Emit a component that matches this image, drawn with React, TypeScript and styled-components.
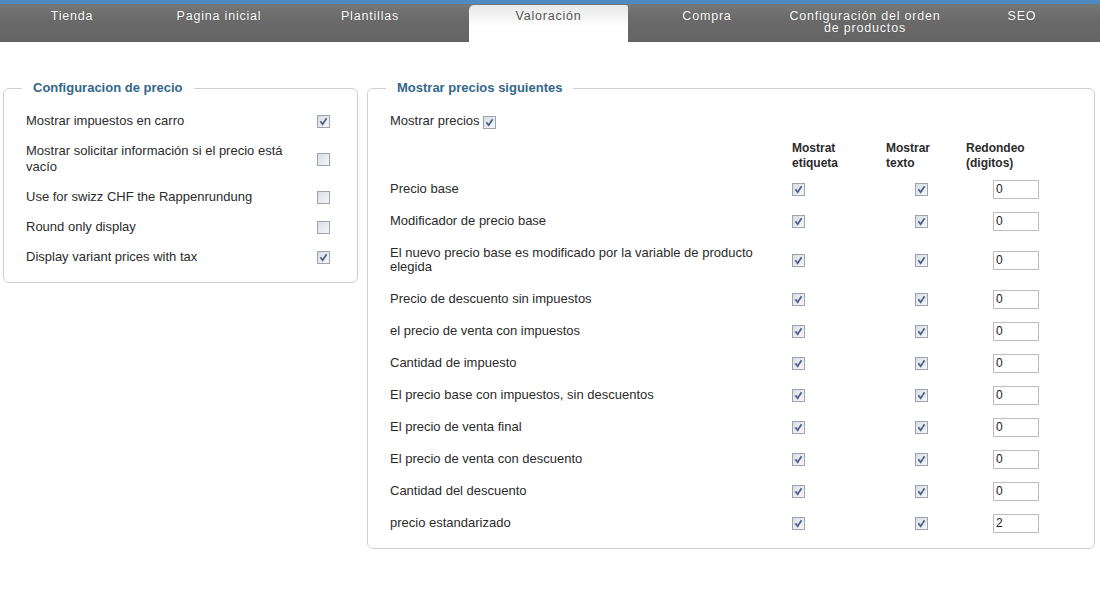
import styled, { createGlobalStyle } from 'styled-components'

const tabs = [
	{ lines: ['Tienda'], width: 144 },
	{ lines: ['Pagina inicial'], width: 150 },
	{ lines: ['Plantillas'], width: 152, tail: 23 },
	{ lines: ['Valoración'], width: 159 },
	{ lines: ['Compra'], width: 158 },
	{ lines: ['Configuración del orden', 'de productos'], width: 158 },
	{ lines: ['SEO'], width: 156 },
]
const activeTab = 3

const generalOptions = [
	{ label: 'Mostrar impuestos en carro', checked: true },
	{ label: 'Mostrar solicitar información si el precio está vacío', checked: false },
	{ label: 'Use for swizz CHF the Rappenrundung', checked: false },
	{ label: 'Round only display', checked: false },
	{ label: 'Display variant prices with tax', checked: true },
]

const priceRows = [
	{ label: 'Precio base', digits: '0' },
	{ label: 'Modificador de precio base', digits: '0' },
	{ label: 'El nuevo precio base es modificado por la variable de producto elegida', digits: '0' },
	{ label: 'Precio de descuento sin impuestos', digits: '0' },
	{ label: 'el precio de venta con impuestos', digits: '0' },
	{ label: 'Cantidad de impuesto', digits: '0' },
	{ label: 'El precio base con impuestos, sin descuentos', digits: '0' },
	{ label: 'El precio de venta final', digits: '0' },
	{ label: 'El precio de venta con descuento', digits: '0' },
	{ label: 'Cantidad del descuento', digits: '0' },
	{ label: 'precio estandarizado', digits: '2' },
]

function Check({ checked }: { checked: boolean }) {
	return (
		<CheckBox>
			{checked && (
				<svg width="9" height="9" viewBox="0 0 9 9">
					<path d="M1.4 4.2 L3.6 7.2 L7.6 1.2" fill="none" stroke="#4b5f8c" strokeWidth="1.7" />
				</svg>
			)}
		</CheckBox>
	)
}

export default function App() {
	return (
		<>
			<GlobalStyle />
			<TabBar>
				{tabs.map((t, i) => (
					<Tab key={i} $active={i === activeTab} $width={t.width} $tail={t.tail || 0}>
						{t.lines.map((l) => (
							<span key={l}>{l}</span>
						))}
					</Tab>
				))}
			</TabBar>

			<Content>
				<LeftPanel>
					<Legend>Configuracion de precio</Legend>
					{generalOptions.map((o) => (
						<OptionRow key={o.label}>
							<OptionLabel>{o.label}</OptionLabel>
							<Check checked={o.checked} />
						</OptionRow>
					))}
				</LeftPanel>

				<RightPanel>
					<Legend>Mostrar precios siguientes</Legend>
					<ShowPrices>
						Mostrar precios <Check checked />
					</ShowPrices>
					<PriceGrid>
						<span />
						<HeadCell>
							Mostrat
							<br />
							etiqueta
						</HeadCell>
						<HeadCell>
							Mostrar
							<br />
							texto
						</HeadCell>
						<HeadCell>
							Redondeo
							<br />
							(digitos)
						</HeadCell>
						{priceRows.map((r) => (
							<PriceRow key={r.label}>
								<PriceLabel>{r.label}</PriceLabel>
								<Cell $indent={0}>
									<Check checked />
								</Cell>
								<Cell $indent={29}>
									<Check checked />
								</Cell>
								<Cell $indent={27}>
									<DigitsInput defaultValue={r.digits} />
								</Cell>
							</PriceRow>
						))}
					</PriceGrid>
				</RightPanel>
			</Content>
		</>
	)
}

const GlobalStyle = createGlobalStyle`
	body {
		margin: 0;
		background: #fff;
		font-family: 'Liberation Sans', Arial, sans-serif;
		font-size: 12px;
		color: #2b2b2b;
	}
`

const TabBar = styled.div`
	display: flex;
	height: 38px;
	border-top: 4px solid #4b8bc0;
	background: linear-gradient(#777 0%, #6a6a6a 40%, #646464 100%);
`

const Tab = styled.div<{ $active: boolean; $width: number; $tail: number }>`
	display: flex;
	flex-direction: column;
	align-items: center;
	box-sizing: border-box;
	flex: 0 0 ${(p) => p.$width + p.$tail}px;
	padding-top: ${(p) => (p.$active ? '5px' : '6px')};
	padding-right: ${(p) => p.$tail}px;
	margin-top: ${(p) => (p.$active ? '1px' : '0')};
	font-size: 12.5px;
	line-height: 12px;
	letter-spacing: 0.8px;
	color: ${(p) => (p.$active ? '#555' : '#fff')};
	text-shadow: ${(p) => (p.$active ? 'none' : '0 0 1px rgba(0,0,0,0.4)')};
	background: ${(p) => (p.$active ? 'linear-gradient(#e8e8e8, #fff 60%)' : 'transparent')};
	border-top-left-radius: ${(p) => (p.$active ? '5px' : '0')};
	border-top-right-radius: ${(p) => (p.$active ? '2px' : '0')};
`

const Content = styled.div`
	display: flex;
	align-items: flex-start;
	gap: 9px;
	padding: 38px 5px 0 3px;
`

const Panel = styled.fieldset`
	margin: 0;
	border: 1px solid #cfcfcf;
	border-radius: 6px;
	min-width: 0;
`

const LeftPanel = styled(Panel)`
	width: 355px;
	box-sizing: border-box;
	padding: 10px 22px 10px 22px;
`

const RightPanel = styled(Panel)`
	flex: 1;
	padding: 10px 22px 9px 22px;
`

const Legend = styled.legend`
	margin-left: -4px;
	padding: 0 11px;
	font-size: 13px;
	font-weight: bold;
	line-height: 16px;
	color: #33678a;
`

const OptionRow = styled.div`
	display: flex;
	align-items: center;
	justify-content: space-between;
	padding: 7px 0;
	padding-right: 5px;
`

const OptionLabel = styled.span`
	width: 272px;
	line-height: 16px;
	font-size: 13px;
`

const CheckBox = styled.span`
	display: inline-flex;
	align-items: center;
	justify-content: center;
	box-sizing: border-box;
	width: 13px;
	height: 13px;
	vertical-align: -2px;
	border: 1px solid #9aa4b2;
	background: linear-gradient(135deg, #d9dde3, #f7f7f7);
`

const ShowPrices = styled.div`
	padding: 7px 0;
	line-height: 16px;
	font-size: 13px;
`

const PriceGrid = styled.div`
	display: grid;
	grid-template-columns: 402px 94px 80px 1fr;
	margin-top: 5px;
`

const HeadCell = styled.div`
	font-weight: bold;
	line-height: 15px;
	padding-bottom: 2px;
`

const PriceRow = styled.div`
	display: contents;
`

const PriceLabel = styled.div`
	padding: 9px 20px 9px 0;
	line-height: 14px;
	font-size: 13px;
	display: flex;
	align-items: center;
`

const Cell = styled.div<{ $indent: number }>`
	display: flex;
	align-items: center;
	padding-left: ${(p) => p.$indent}px;
`

const DigitsInput = styled.input`
	box-sizing: border-box;
	width: 46px;
	height: 19px;
	padding: 0 2px;
	border: 1px solid #bdbdbd;
	font-family: 'Liberation Sans', Arial, sans-serif;
	font-size: 12px;
	color: #222;
	outline: none;
`
